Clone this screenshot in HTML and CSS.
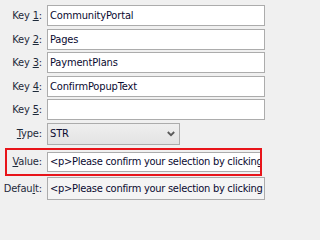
FILE: index.html
```
<!DOCTYPE html>
<html>
<head>
<meta charset="utf-8">
<link rel="stylesheet" href="styles.css">
</head>
<body>
<div class="form">
  <div class="row"><span class="label">Key <u>1</u>:</span><div class="field">CommunityPortal</div></div>
  <div class="row"><span class="label">Key <u>2</u>:</span><div class="field">Pages</div></div>
  <div class="row"><span class="label">Key <u>3</u>:</span><div class="field">PaymentPlans</div></div>
  <div class="row"><span class="label">Key <u>4</u>:</span><div class="field">ConfirmPopupText</div></div>
  <div class="row"><span class="label">Key <u>5</u>:</span><div class="field"></div></div>
  <div class="row row-type"><span class="label"><u>T</u>ype:</span><div class="select"><span>STR</span><svg class="chev" width="8" height="6" viewBox="0 0 8 6"><polyline points="0.8,1 4,4.2 7.2,1" fill="none" stroke="#5a5a5a" stroke-width="1.8"/></svg></div></div>
  <div class="row row-value"><span class="label"><u>V</u>alue:</span><div class="field field-value">&lt;p&gt;Please confirm your selection by clicking</div></div>
  <div class="row row-default"><span class="label">Defau<u>l</u>t:</span><div class="field field-default">&lt;p&gt;Please confirm your selection by clicking</div></div>
</div>
</body>
</html>
```
FILE: styles.css
```
html, body {
  margin: 0;
  padding: 0;
  background: #f0f0f0;
}
.form {
  padding-top: 5px;
  font-family: "DejaVu Sans Condensed", "Liberation Sans", sans-serif;
  font-size: 11px;
  letter-spacing: -0.15px;
  display: flex;
  flex-direction: column;
  width: 264px;
}
.row {
  display: flex;
  align-items: center;
  height: 21px;
  margin-bottom: 2.5px;
}
.label {
  width: 42px;
  text-align: right;
  color: #1e2a3a;
  flex: none;
  white-space: nowrap;
}
.label u {
  text-decoration-thickness: 1px;
  text-underline-offset: 1px;
}
.field {
  margin-left: 5px;
  width: 214px;
  height: 19px;
  border: 1px solid #acacac;
  background: #fff;
  color: #0a0a30;
  line-height: 19px;
  padding-left: 2px;
  box-sizing: content-box;
  white-space: nowrap;
  overflow: hidden;
  flex: none;
}
.field-value, .field-default {
  letter-spacing: -0.27px;
}
.row-type {
  height: 22px;
  margin-top: 0;
  margin-bottom: 3px;
}
.select {
  margin-left: 5px;
  border: 1px solid #acacac;
  background: linear-gradient(#efefef, #e3e3e3);
  color: #0a0a30;
  display: flex;
  align-items: center;
  justify-content: space-between;
  padding-left: 2px;
  padding-right: 4px;
  box-sizing: border-box;
  width: 133px;
  height: 22px;
}
.chev {
  display: block;
}
.row-value {
  position: relative;
  height: 28px;
  margin-bottom: 1px;
}
.row-value::after {
  content: "";
  position: absolute;
  left: 5px;
  top: 0;
  width: 257px;
  height: 28px;
  border: 2px solid #e8141a;
  box-sizing: border-box;
}
.field-value {
  width: 211px;
  height: 18px;
  line-height: 18px;
}
.row-default {
  height: 23px;
}
.field-default {
  height: 21px;
  line-height: 21px;
  background: #f4f4f4;
}
```
